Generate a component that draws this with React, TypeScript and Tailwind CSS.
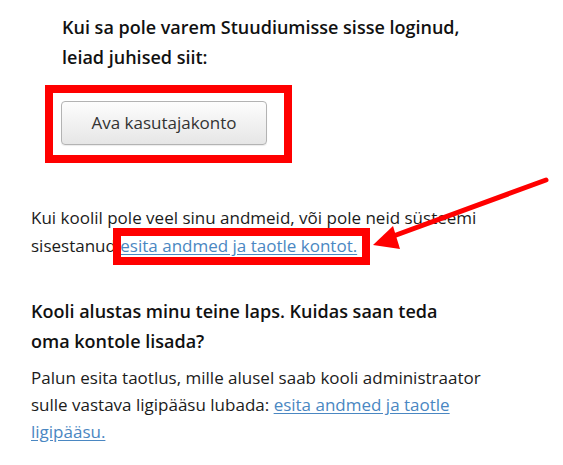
import React from "react";

export default function App() {
  return (
    <div className="relative w-[563px] h-[465px] overflow-hidden bg-white text-[#1b1b1b] font-['Open_Sans',sans-serif]">
      <div className="pl-[62px] pt-[12px]">
        <h3 className="text-[18px] leading-[30px] font-semibold text-[#111]">
          Kui sa pole varem Stuudiumisse sisse loginud,
          <br />
          leiad juhised siit:
        </h3>
        <div className="mt-[13px] -ml-[17px] w-[247px] h-[78px] border-[8px] border-[#ff0000] pl-[8px] pt-[8px]">
          <button className="w-[206px] h-[44px] rounded-[4px] border border-[#b3b3b3] bg-gradient-to-b from-[#fdfdfd] to-[#e6e6e6] text-[17px] text-[#333] shadow-[0_1px_1px_rgba(0,0,0,0.08)]">
            Ava kasutajakonto
          </button>
        </div>
      </div>

      <p className="mt-[41px] px-[31px] text-[17px] leading-[28px]">
        Kui koolil pole veel sinu andmeid, või pole neid süsteemi
        <br />
        sisestanud{" "}
        <a href="#" className="relative text-[#4a87c2] underline underline-offset-2">
          esita andmed ja taotle kontot.
          <span className="absolute -left-[7px] -right-[13px] -top-[6px] -bottom-[8px] border-[8px] border-[#ff0000]" />
        </a>
      </p>

      <h3 className="mt-[36px] px-[31px] text-[18px] leading-[30px] font-semibold text-[#111]">
        Kooli alustas minu teine laps. Kuidas saan teda
        <br />
        oma kontole lisada?
      </h3>

      <p className="mt-[8px] px-[31px] text-[17px] leading-[27px]">
        Palun esita taotlus, mille alusel saab kooli administraator
        <br />
        sulle vastava ligipääsu lubada:{" "}
        <a href="#" className="text-[#4a87c2] underline underline-offset-2">
          esita andmed ja taotle
          <br />
          ligipääsu.
        </a>
      </p>

      <svg
        className="absolute left-0 top-0 pointer-events-none"
        width="563"
        height="465"
        viewBox="0 0 563 465"
      >
        <line x1="546" y1="180" x2="388" y2="238" stroke="#ff0000" strokeWidth="5" strokeLinecap="round" />
        <polygon points="373,245 393,226 400,249" fill="#ff0000" />
      </svg>
    </div>
  );
}
